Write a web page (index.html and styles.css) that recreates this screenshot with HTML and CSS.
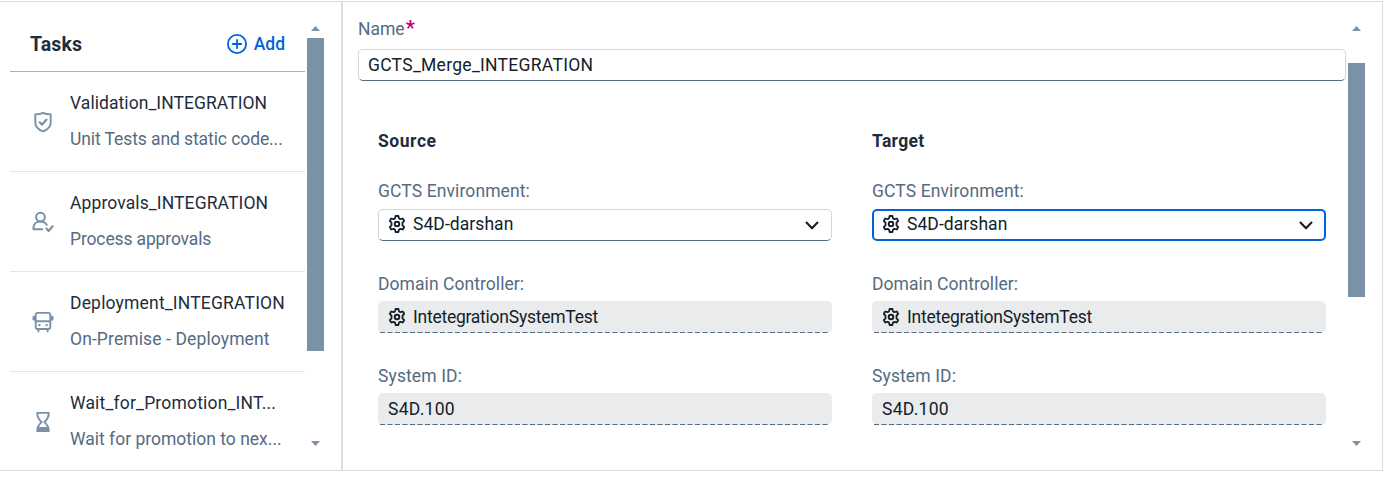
FILE: index.html
```
<!DOCTYPE html>
<html lang="en">
<head>
<meta charset="utf-8">
<title>Tasks</title>
<link rel="stylesheet" href="styles.css">
</head>
<body>
<svg width="0" height="0" class="symbols">
  <symbol id="gear" viewBox="0 0 18 18">
    <path d="M7 3.400 7.600 1h2.800l.6 2.400 1.400.8 2.400-.7 1.400 2.400-1.700 1.800v2.600l1.700 1.800-1.400 2.400-2.400-.7-1.400.8-.6 2.400H7.600L7 14.600l-1.400-.8-2.400.7-1.400-2.400 1.700-1.800V7.700L1.800 5.900l1.400-2.400 2.400.7z" fill="none" stroke="currentColor" stroke-width="1.800" stroke-linejoin="round"/>
    <circle cx="9" cy="9" r="2.300" fill="none" stroke="currentColor" stroke-width="1.900"/>
  </symbol>
  <symbol id="chevron" viewBox="0 0 14 9">
    <path d="M1.500 1.500 7 7.200l5.500-5.700" fill="none" stroke="currentColor" stroke-width="2.100" stroke-linecap="round" stroke-linejoin="round"/>
  </symbol>
  <symbol id="up" viewBox="0 0 9 5"><path d="M0 5h9L4.500 0z" fill="currentColor"/></symbol>
  <symbol id="down" viewBox="0 0 9 5"><path d="M0 0h9L4.500 5z" fill="currentColor"/></symbol>
</svg>
<div class="frame">
  <aside class="tasks">
    <div class="task-panel">
      <header class="task-header">
        <h2>Tasks</h2>
        <button class="add">
          <svg width="20" height="20" viewBox="0 0 20 20" fill="none" stroke="currentColor" stroke-linecap="round"><circle cx="10" cy="10" r="9.100" stroke-width="1.800"/><path d="M10 5.800v8.400M5.800 10h8.400" stroke-width="1.800"/></svg>
          <span>Add</span>
        </button>
      </header>
      <ul class="task-list">
        <li class="task">
          <svg class="task-icon" viewBox="0 0 22 22" fill="none" stroke="currentColor" stroke-width="1.900" stroke-linejoin="round" stroke-linecap="round"><path d="M11 1.900c2.200 1.200 4.800 1.500 7.700 1.500v8c0 4.600-3.500 7.300-7.700 9-4.200-1.700-7.700-4.400-7.700-9v-8c2.900 0 5.500-.3 7.700-1.500z"/><path d="m7.700 11.300 2.400 2.300 4.300-4.900" stroke-width="2.200"/></svg>
          <div><p class="name s05">Validation_INTEGRATION</p><p class="desc s-10">Unit Tests and static code...</p></div>
        </li>
        <li class="task">
          <svg class="task-icon" viewBox="0 0 22 22" fill="none" stroke="currentColor" stroke-width="2" stroke-linejoin="round" stroke-linecap="round"><circle cx="8.500" cy="6.100" r="4.400"/><path d="M10.200 18.200H1.500v-1.500c0-3.700 3-6.200 7-6.200 2.900 0 5.100 1.200 6.200 3.300"/><path d="m14.600 17.600 2 2.400 4-4.700" stroke-width="2.200"/></svg>
          <div><p class="name s10">Approvals_INTEGRATION</p><p class="desc s-15">Process approvals</p></div>
        </li>
        <li class="task">
          <svg class="task-icon" viewBox="0 0 22 22" fill="none" stroke="currentColor" stroke-width="1.900" stroke-linejoin="round" stroke-linecap="round"><rect x="3.700" y="1.900" width="14.600" height="16.100" rx="2"/><path d="M3.700 10.200h14.600M6.400 18.500v2M15.600 18.500v2"/><path d="M1.900 6.100v2.200M20.100 6.100v2.200" stroke-width="2.800"/><path d="M7.300 14.100h.1M14.600 14.100h.1" stroke-width="2.400"/></svg>
          <div><p class="name s18">Deployment_INTEGRATION</p><p class="desc s10">On-Premise - Deployment</p></div>
        </li>
        <li class="task">
          <svg class="task-icon" viewBox="0 0 22 22" fill="none" stroke="currentColor" stroke-width="1.900" stroke-linejoin="round" stroke-linecap="round"><path d="M5.200 1.900h11.600c0 4-1.600 6.600-4.500 9.100 2.900 2.500 4.500 5.100 4.500 9.100H5.200c0-4 1.600-6.600 4.500-9.100-2.900-2.500-4.500-5.100-4.500-9.100z"/><path d="M5.500 16h11l.7 4.300H4.800z" fill="currentColor" stroke="none"/></svg>
          <div><p class="name s18">Wait_for_Promotion_INT...</p><p class="desc">Wait for promotion to nex...</p></div>
        </li>
      </ul>
    </div>
    <div class="scrollbar">
      <svg class="arrow"><use href="#up"/></svg>
      <div class="track"><div class="thumb left-thumb"></div></div>
      <svg class="arrow"><use href="#down"/></svg>
    </div>
  </aside>
  <main class="detail">
    <div class="form">
      <label class="label name-label">Name<span class="required">*</span></label>
      <div class="input wide"><span class="s28">GCTS_Merge_INTEGRATION</span></div>
      <div class="columns">
        <section>
          <h3 class="source">Source</h3>
          <div class="field"><span class="label s10">GCTS Environment:</span><div class="input"><svg class="gear"><use href="#gear"/></svg><span class="s05">S4D-darshan</span><svg class="chevron"><use href="#chevron"/></svg></div></div>
          <div class="field fixed"><span class="label s05">Domain Controller:</span><div class="readonly"><svg class="gear"><use href="#gear"/></svg><span class="s-25">IntetegrationSystemTest</span><svg class="dashes"><path d="M2 .5H452"/></svg></div></div>
          <div class="field fixed"><span class="label s10">System ID:</span><div class="readonly"><span class="s28">S4D.100</span><svg class="dashes"><path d="M2 .5H452"/></svg></div></div>
        </section>
        <section>
          <h3 class="target">Target</h3>
          <div class="field"><span class="label s10">GCTS Environment:</span><div class="input focused"><svg class="gear"><use href="#gear"/></svg><span class="s05">S4D-darshan</span><svg class="chevron"><use href="#chevron"/></svg></div></div>
          <div class="field fixed"><span class="label s05">Domain Controller:</span><div class="readonly"><svg class="gear"><use href="#gear"/></svg><span class="s-25">IntetegrationSystemTest</span><svg class="dashes"><path d="M2 .5H452"/></svg></div></div>
          <div class="field fixed"><span class="label s10">System ID:</span><div class="readonly"><span class="s28">S4D.100</span><svg class="dashes"><path d="M2 .5H452"/></svg></div></div>
        </section>
      </div>
    </div>
    <div class="scrollbar">
      <svg class="arrow"><use href="#up"/></svg>
      <div class="track"><div class="thumb right-thumb"></div></div>
      <svg class="arrow"><use href="#down"/></svg>
    </div>
  </main>
</div>
</body>
</html>
```
FILE: styles.css
```
* { box-sizing: border-box; }
body {
  margin: 0;
  padding-top: 1px;
  background: #fff;
  color: #1d2d3e;
  font: 17.5px/20px Roboto, "Liberation Sans", sans-serif;
  overflow: hidden;
}
h2, h3, p, ul { margin: 0; padding: 0; }
.symbols { position: absolute; }
.frame {
  display: flex;
  width: 1383px;
  height: 470px;
  border: 1px solid #d9dde3;
  border-left: 0;
}
.tasks {
  display: flex;
  gap: 2px;
  width: 343px;
  padding-left: 10px;
  border-right: 2px solid #d9dfe5;
}
.task-panel { width: 295px; overflow: hidden; }
.task-header {
  display: flex;
  align-items: center;
  justify-content: space-between;
  height: 70px;
  padding: 15px 20px 0 20px;
  border-bottom: 1px solid #a3b2c0;
}
h2 { padding-top: 2px; font-size: 19.5px; letter-spacing: .1px; }
.add {
  display: flex;
  align-items: center;
  gap: 7px;
  padding: 0;
  border: 0;
  background: none;
  color: #0064d9;
  font: 500 17.5px/20px Roboto, sans-serif;
}
.task-list { list-style: none; }
.task {
  display: flex;
  align-items: center;
  gap: 16.5px;
  height: 100px;
  padding-left: 21.5px;
  border-bottom: 1px solid #e5e5e5;
}
.task:last-child { border-bottom: 0; }
.task-icon { width: 22px; height: 22px; color: #7b91a8; flex: none; }
.task > div { padding-bottom: 2px; }
.task p { line-height: 36px; white-space: nowrap; }
.desc { color: #556b82; }
.scrollbar {
  display: flex;
  flex-direction: column;
  align-items: center;
  width: 17px;
  padding: 24px 0;
  color: #7b91a8;
}
.arrow { width: 9px; height: 5px; flex: none; }
.track { width: 17px; height: 410px; }
.thumb { background: #7b91a8; }
.left-thumb { height: 313px; margin-top: 7px; }
.right-thumb { height: 234px; margin-top: 32px; }
.detail { display: flex; gap: 2px; padding-left: 15px; }
.form { width: 988px; padding-top: 17px; }
.label { display: block; color: #556b82; }
.required {
  margin-left: 1px;
  color: #ba066c;
  font-size: 20px;
  font-weight: 700;
  line-height: 10px;
}
.input, .readonly {
  position: relative;
  display: flex;
  align-items: center;
  width: 454px;
  height: 32px;
  padding: 0 10px 2px 9px;
  border-radius: 5px;
  color: #131e29;
}
.input {
  border: 1px solid #cdd5de;
  border-bottom-color: #556b82;
}
.wide { width: 988px; margin-top: 10px; padding-bottom: 0; }
.focused { border: 2px solid #0064d9; padding: 0 9px 2px 8px; }
.readonly { padding: 0 10px; background: #eaebed; }
.dashes {
  position: absolute;
  left: 0;
  bottom: 0;
  width: 454px;
  height: 1px;
  stroke: #556b82;
  stroke-dasharray: 5 2.5;
}
.columns { display: flex; gap: 40px; padding: 50px 0 0 20px; }
section { width: 454px; }
h3 { margin-bottom: 30px; font-size: 17.5px; line-height: 20px; }
.source { letter-spacing: .55px; }
.target { letter-spacing: .35px; }
.field { margin-bottom: 33px; }
.field .label { margin-bottom: 8px; }
.fixed .label { margin-bottom: 7px; }
.gear { width: 18px; height: 18px; margin-right: 7px; }
.chevron { width: 14px; height: 9px; margin: 3px 2px 0 auto; }
.s05 { letter-spacing: .06px; }
.s10 { letter-spacing: .11px; }
.s18 { letter-spacing: .18px; }
.s28 { letter-spacing: .28px; }
.s-10 { letter-spacing: -.09px; }
.s-15 { letter-spacing: -.14px; }
.s-25 { letter-spacing: -.25px; }
```
